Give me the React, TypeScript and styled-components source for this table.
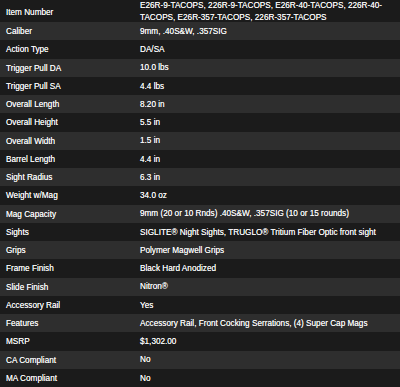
import React from 'react'
import styled, { createGlobalStyle } from 'styled-components'

const GlobalStyle = createGlobalStyle`
    html, body {
        margin: 0;
        padding: 0;
        background: #1c1c1c;
    }
`

const Table = styled.div`
    width: 400px;
    height: 387px;
    overflow: hidden;
    font-family: 'Liberation Sans', Arial, sans-serif;
    font-size: 8.2px;
    color: #f6f6f6;
    background: #1c1c1c;
`

const Row = styled.div<{ $light: boolean; $tall?: boolean }>`
    position: relative;
    display: grid;
    grid-template-columns: 134px 1fr;
    align-items: ${(p) => (p.$tall ? 'start' : 'center')};
    box-sizing: border-box;
    height: ${(p) => (p.$tall ? '22px' : '18.25px')};
    padding-left: 6px;
    padding-top: ${(p) => (p.$tall ? '0' : '1px')};
    background: ${(p) => (p.$light ? '#2e2e2e' : '#1b1b1b')};

    & + &::before {
        content: '';
        position: absolute;
        left: 0;
        right: 0;
        top: 0;
        height: 1px;
        background:
            linear-gradient(90deg, transparent 58%, #7a7a7a 68%, #7a7a7a 76%, transparent 86%),
            repeating-linear-gradient(90deg, #c4c4c4 0 1px, #1a1a1a 1px 2px);
    }
`

const Label = styled.span<{ $tall?: boolean }>`
    white-space: nowrap;
    align-self: center;
    margin-top: ${(p) => (p.$tall ? '1px' : '0')};
    text-shadow: 0 0 0.6px rgba(255, 255, 255, 0.9);
`

const Value = styled.span`
    line-height: 11.5px;
    text-shadow: 0 0 0.6px rgba(255, 255, 255, 0.9);
`

const specs: [string, string][] = [
    ['Item Number', 'E26R-9-TACOPS, 226R-9-TACOPS, E26R-40-TACOPS, 226R-40-TACOPS, E26R-357-TACOPS, 226R-357-TACOPS'],
    ['Caliber', '9mm, .40S&W, .357SIG'],
    ['Action Type', 'DA/SA'],
    ['Trigger Pull DA', '10.0 lbs'],
    ['Trigger Pull SA', '4.4 lbs'],
    ['Overall Length', '8.20 in'],
    ['Overall Height', '5.5 in'],
    ['Overall Width', '1.5 in'],
    ['Barrel Length', '4.4 in'],
    ['Sight Radius', '6.3 in'],
    ['Weight w/Mag', '34.0 oz'],
    ['Mag Capacity', '9mm (20 or 10 Rnds) .40S&W, .357SIG (10 or 15 rounds)'],
    ['Sights', 'SIGLITE® Night Sights, TRUGLO® Tritium Fiber Optic front sight'],
    ['Grips', 'Polymer Magwell Grips'],
    ['Frame Finish', 'Black Hard Anodized'],
    ['Slide Finish', 'Nitron®'],
    ['Accessory Rail', 'Yes'],
    ['Features', 'Accessory Rail, Front Cocking Serrations, (4) Super Cap Mags'],
    ['MSRP', '$1,302.00'],
    ['CA Compliant', 'No'],
    ['MA Compliant', 'No'],
]

export default function App() {
    return (
        <>
            <GlobalStyle />
            <Table>
                {specs.map(([label, value], i) => (
                    <Row key={label} $light={i % 2 === 1} $tall={i === 0}>
                        <Label $tall={i === 0}>{label}</Label>
                        <Value>{value}</Value>
                    </Row>
                ))}
            </Table>
        </>
    )
}
